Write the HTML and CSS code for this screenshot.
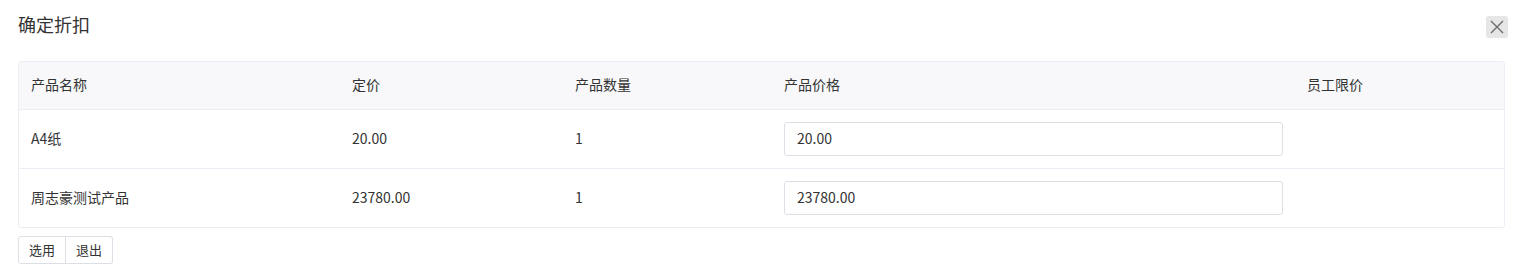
FILE: index.html
```html
<!DOCTYPE html>
<html lang="zh">
<head>
<meta charset="utf-8">
<link rel="stylesheet" href="styles.css">
</head>
<body>
<div class="dialog">
  <div class="dialog-header">
    <div class="title">确定折扣</div>
    <button class="close" aria-label="关闭">
      <svg width="14" height="14" viewBox="0 0 14 14"><path d="M1 1L13 13M13 1L1 13" stroke="#6b6b6b" stroke-width="1.4" fill="none"/></svg>
    </button>
  </div>
  <div class="table-wrap">
    <table class="grid">
      <colgroup>
        <col class="c1"><col class="c2"><col class="c3"><col class="c4"><col class="c5">
      </colgroup>
      <thead>
        <tr><th>产品名称</th><th>定价</th><th>产品数量</th><th>产品价格</th><th>员工限价</th></tr>
      </thead>
      <tbody>
        <tr><td>A4纸</td><td>20.00</td><td>1</td><td class="in-cell"><input class="inp" value="20.00"></td><td></td></tr>
        <tr><td>周志豪测试产品</td><td>23780.00</td><td>1</td><td class="in-cell"><input class="inp" value="23780.00"></td><td></td></tr>
      </tbody>
    </table>
  </div>
  <div class="btn-group">
    <button class="btn">选用</button><button class="btn">退出</button>
  </div>
</div>
</body>
</html>
```
FILE: styles.css
```css
* { box-sizing: border-box; }
html, body { margin: 0; background: #fff; }
body {
  font-family: "Noto Sans CJK SC", "Noto Sans", sans-serif;
  color: #333;
  font-size: 14px;
}
.dialog { padding: 11px 17px 0 18px; }
.dialog-header {
  display: flex;
  justify-content: space-between;
  align-items: flex-start;
  height: 50px;
}
.title { font-size: 18px; line-height: 26px; color: #333; }
.close {
  margin-top: 5px;
  width: 22px; height: 22px;
  border: 0; border-radius: 3px;
  background: #e6e6e6;
  display: flex; align-items: center; justify-content: center;
  padding: 0;
}
.table-wrap {
  width: 1487px;
  border: 1px solid #ebeef5;
  border-radius: 3px;
  overflow: hidden;
}
.grid { width: 100%; border-collapse: separate; border-spacing: 0; table-layout: fixed; }
.c1 { width: 321px; } .c2 { width: 223px; } .c3 { width: 209px; } .c4 { width: 523px; } .c5 { width: 209px; }
.grid th {
  background: #f8f8fa;
  font-weight: normal;
  text-align: left;
  height: 48px;
  padding: 0 12px 3px;
  font-size: 14px;
  border-bottom: 1px solid #ebeef5;
}
.grid td {
  height: 59px;
  padding: 0 12px 3px;
  font-size: 14px;
  border-bottom: 1px solid #ebeef5;
}
.grid td.in-cell { padding: 0 12px; }
.grid tbody tr:last-child td { border-bottom: 0; height: 58px; }
.inp {
  width: 499px; height: 34px;
  border: 1px solid #dcdfe6;
  border-radius: 3px;
  padding: 0 12px 2px;
  font: inherit; font-size: 14px;
  color: #333;
  outline: none;
  display: block;
}
.btn-group { display: flex; margin-top: 8px; }
.btn {
  height: 28px;
  padding: 0 10px 2px;
  background: #fff;
  border: 1px solid #dcdfe6;
  font: inherit; font-size: 13px;
  color: #333;
}
.btn:first-child { border-radius: 3px 0 0 3px; }
.btn + .btn { border-left: 0; border-radius: 0 3px 3px 0; }
```
